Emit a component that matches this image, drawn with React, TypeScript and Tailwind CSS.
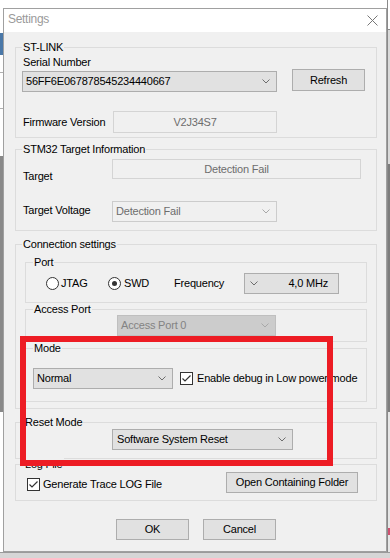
import type { ReactNode } from 'react'

function Chevron({ color = '#6d6d6d' }: { color?: string }) {
  return (
    <svg width="8" height="5" viewBox="0 0 8 5" className="shrink-0">
      <polyline points="0.5,0.5 4,4 7.5,0.5" fill="none" stroke={color} strokeWidth="1" />
    </svg>
  )
}

interface ComboProps {
  text: string
  className: string
  tone?: 'normal' | 'disabled' | 'grey'
}

function Combo({ text, className, tone = 'normal' }: ComboProps) {
  const look =
    tone === 'normal'
      ? 'bg-[#e1e1e1] border-[#adadad] text-black'
      : tone === 'grey'
        ? 'bg-[#cccccc] border-[#bfbfbf] text-[#838383]'
        : 'bg-[#f0f0f0] border-[#cccccc] text-[#6d6d6d]'
  return (
    <div className={`flex items-center border pl-[3px] pr-[6px] ${look} ${className}`}>
      <span className="flex-1 whitespace-nowrap">{text}</span>
      <Chevron color={tone === 'normal' ? '#6d6d6d' : '#a8a8a8'} />
    </div>
  )
}

function Button({ children, className }: { children: ReactNode; className: string }) {
  return (
    <div className={`flex items-center justify-center border border-[#adadad] bg-[#e1e1e1] ${className}`}>
      {children}
    </div>
  )
}

function Field({ text, className }: { text: string; className: string }) {
  return (
    <div className={`flex items-center justify-center border border-[#d4d4d4] bg-[#f0f0f0] text-[#6d6d6d] ${className}`}>
      {text}
    </div>
  )
}

function Group({ legend, inset = 6, className, children }: { legend: string; inset?: number; className: string; children?: ReactNode }) {
  const left = inset === 6 ? 'left-[6px]' : inset === 7 ? 'left-[7px]' : 'left-[8px]'
  return (
    <div className={`relative border border-[#dcdcdc] ${className}`}>
      <span className={`absolute top-[-7px] ${left} bg-[#f0f0f0] px-[1px] whitespace-nowrap`}>{legend}</span>
      {children}
    </div>
  )
}

function Radio({ checked }: { checked?: boolean }) {
  return (
    <div className="w-[13px] h-[13px] rounded-full border border-[#333] bg-white flex items-center justify-center shrink-0">
      {checked && <div className="w-[5px] h-[5px] rounded-full bg-[#333]" />}
    </div>
  )
}

function Check() {
  return (
    <div className="w-[13px] h-[13px] border border-[#333] bg-white shrink-0">
      <svg width="11" height="11" viewBox="0 0 11 11">
        <polyline points="1.5,5.5 4,8 9.5,2.5" fill="none" stroke="#333" strokeWidth="1.2" />
      </svg>
    </div>
  )
}

export default function App() {
  return (
    <div className="relative w-[390px] h-[558px] overflow-hidden bg-white flex flex-col font-['Liberation_Sans',Arial,sans-serif] text-[11px] leading-[13px] tracking-[-0.2px] text-black">
      <div className="flex h-[552px]">
        {/* what shows of the window behind, left */}
        <div className="w-[3px] flex flex-col">
          <div className="h-[33px] bg-white" />
          <div className="h-[22px] bg-[#4a78a8]" />
          <div className="h-[17px] bg-white" />
          <div className="h-[1px] bg-[#b0b0b0]" />
          <div className="h-[35px] bg-white" />
          <div className="h-[1px] bg-[#b0b0b0]" />
          <div className="h-[47px] bg-white" />
          <div className="h-[256px] bg-[#898989]" />
          <div className="flex-1 bg-white" />
        </div>

        <div className="w-[384px] mt-[8px] h-[544px] border border-[#a0a0a0] bg-[#f0f0f0] flex flex-col">
          <div className="h-[23px] bg-white flex items-center justify-between pl-[4px] pr-[8px] pb-[3px]">
            <span className="text-[12px] tracking-[-0.3px] text-[#9a9a9a]">Settings</span>
            <svg width="11" height="11" viewBox="0 0 11 11" className="mt-[3px]">
              <path d="M0.5 0.5 L10.5 10.5 M10.5 0.5 L0.5 10.5" stroke="#777" strokeWidth="1" />
            </svg>
          </div>

          <div className="flex flex-col pl-[11px] pr-[9px]">
            <Group legend="ST-LINK" className="mt-[15px] h-[91px] pl-[6px]">
              <div className="mt-[8px] pl-[1px]">Serial Number</div>
              <div className="flex items-start mt-[2px]">
                <Combo text="56FF6E067878545234440667" className="w-[255px] h-[21px]" />
                <Button className="ml-[15px] -mt-[2px] w-[73px] h-[22px]">Refresh</Button>
              </div>
              <div className="flex items-center mt-[19px]">
                <span className="w-[91px] pl-[1px]">Firmware Version</span>
                <Field text="V2J34S7" className="w-[164px] h-[22px]" />
              </div>
            </Group>

            <Group legend="STM32 Target Information" className="mt-[11px] h-[82px] pl-[7px]">
              <div className="flex items-start mt-[9px]">
                <span className="w-[89px] mt-[11px]">Target</span>
                <Field text="Detection Fail" className="w-[249px] h-[20px]" />
              </div>
              <div className="flex items-center mt-[18px]">
                <span className="w-[89px] pb-[2px]">Target Voltage</span>
                <Combo text="Detection Fail" tone="disabled" className="w-[165px] h-[21px]" />
              </div>
            </Group>

            <Group legend="Connection settings" className="mt-[13px] h-[165px] px-[9px]">
              <Group legend="Port" inset={7} className="mt-[17px] h-[41px]">
                <div className="flex items-center h-[21px] mt-[10px] pl-[20px]">
                  <div className="w-[62px] flex items-center gap-[2px]">
                    <Radio />
                    <span>JTAG</span>
                  </div>
                  <div className="w-[66px] flex items-center gap-[3px]">
                    <Radio checked />
                    <span>SWD</span>
                  </div>
                  <span className="w-[70px]">Frequency</span>
                  <div className="w-[95px] h-[21px] flex items-center border border-[#adadad] bg-[#e1e1e1] pl-[5px] pr-[10px]">
                    <Chevron />
                    <span className="flex-1 text-right">4,0 MHz</span>
                  </div>
                </div>
              </Group>

              <Group legend="Access Port" inset={7} className="mt-[6px] h-[33px]">
                <Combo text="Access Port 0" tone="grey" className="mt-[5px] ml-[91px] w-[159px] h-[21px]" />
              </Group>

              <Group legend="Mode" inset={7} className="mt-[6px] h-[54px]">
                <div className="flex items-center mt-[19px] pl-[7px]">
                  <Combo text="Normal" className="w-[140px] h-[21px]" />
                  <div className="ml-[7px]">
                    <Check />
                  </div>
                  <span className="ml-[4px] whitespace-nowrap">Enable debug in Low power mode</span>
                </div>
              </Group>
            </Group>

            <Group legend="Reset Mode" inset={8} className="mt-[13px] h-[37px]">
              <Combo text="Software System Reset" className="mt-[6px] ml-[96px] w-[181px] h-[21px] !pl-[4px]" />
            </Group>

            <Group legend="Log File" inset={8} className="mt-[5px] h-[37px]">
              <div className="flex items-start pl-[11px]">
                <div className="flex items-center mt-[13px]">
                  <Check />
                  <span className="ml-[3px]">Generate Trace LOG File</span>
                </div>
                <Button className="ml-auto mr-[18px] mt-[7px] w-[132px] h-[21px]">Open Containing Folder</Button>
              </div>
            </Group>

            <div className="flex mt-[18px] ml-[101px] gap-[14px]">
              <Button className="w-[73px] h-[21px]">OK</Button>
              <Button className="w-[73px] h-[21px]">Cancel</Button>
            </div>
          </div>
        </div>

        {/* what shows of the window behind, right */}
        <div className="w-[3px] flex flex-col border-l border-[#8a8a8a]">
          <div className="h-[29px] bg-white" />
          <div className="h-[1px] bg-[#8c8c8c]" />
          <div className="h-[134px] bg-[#dadada]" />
          <div className="h-[248px] bg-[#7d7d7d]" />
          <div className="h-[116px] bg-[#e6e6e6]" />
          <div className="h-[7px] bg-[#d05070]" />
          <div className="flex-1 bg-[#e6e6e6]" />
        </div>
      </div>
      <div className="h-[6px] border-t border-[#9a9a9a] bg-[#d6d6d6]" />

      {/* red annotation drawn over the dialog */}
      <div className="absolute left-[20px] top-[336px] w-[313px] h-[130px] border-[6px] border-[#ed1c24]" />
    </div>
  )
}
